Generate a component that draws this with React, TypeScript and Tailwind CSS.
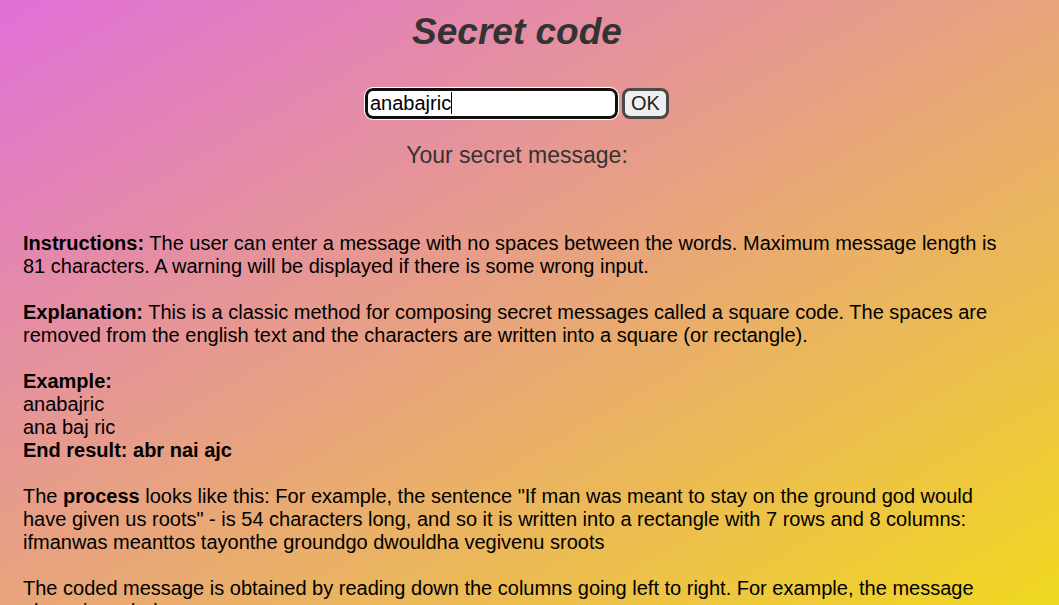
import { useState } from "react";

const SAMPLE = "anabajric";

function squareCode(text: string) {
  const cols = Math.ceil(Math.sqrt(text.length));
  return Array.from({ length: cols }, (_, c) =>
    text.split("").filter((_, i) => i % cols === c).join("")
  ).join(" ");
}

export default function App() {
  const [text, setText] = useState(SAMPLE);
  const [result, setResult] = useState("");
  const untouched = text === SAMPLE;
  return (
    <main className="h-screen overflow-y-auto bg-[linear-gradient(to_bottom_right,#e070d8,#f0d820)] py-[9px] pr-12 pl-[23px] font-['Liberation_Sans',Arial,sans-serif] text-black [scrollbar-width:none]">
      <header className="mb-[62px] text-center text-[#333]">
        <h1 className="mb-[33px] text-[37px] leading-[46px] font-bold italic">Secret code</h1>
        <form
          className="mb-[21px] flex items-center justify-center gap-1 text-[20px]"
          onSubmit={(e) => {
            e.preventDefault();
            setResult(squareCode(text));
          }}
        >
          <div className="relative flex">
            <input
              aria-label="Message"
              maxLength={81}
              autoFocus
              value={text}
              onChange={(e) => setText(e.target.value)}
              className={
                "h-[31px] w-[253px] rounded-[8px] border-3 border-[#101010] bg-white px-[2px] text-black outline outline-white " +
                (untouched ? "caret-transparent" : "caret-black")
              }
            />
            {untouched && (
              <span aria-hidden="true" className="pointer-events-none absolute top-1 left-[86px] h-[22px] w-px bg-black" />
            )}
          </div>
          <button
            type="submit"
            className="h-[31px] w-[47px] rounded-[8px] border-3 border-[#4a4a4a] bg-[#efefef] pb-[2px] leading-[22px] text-[#222]"
          >
            OK
          </button>
        </form>
        <p className="text-[23px] leading-[30px]">Your secret message: {result}</p>
      </header>
      <section className="flex flex-col gap-[23px] text-[20px] leading-[23px]">
        <p>
          <b>Instructions:</b> The user can enter a message with no spaces between the words. Maximum message length is 81 characters. A warning will be displayed if there is some wrong input.
        </p>
        <p>
          <b>Explanation:</b> This is a classic method for composing secret messages called a square code. The spaces are removed from the english text and the characters are written into a square (or rectangle).
        </p>
        <p>
          <b>Example:</b>
          <br />
          anabajric
          <br />
          ana baj ric
          <br />
          <b>End result: abr nai ajc</b>
        </p>
        <p>
          The <b>process</b> looks like this: For example, the sentence "If man was meant to stay on the ground god would have given us roots" - is 54 characters long, and so it is written into a rectangle with 7 rows and 8 columns: ifmanwas meanttos tayonthe groundgo dwouldha vegivenu sroots
        </p>
        <p>
          The coded message is obtained by reading down the columns going left to right. For example, the message above is coded as:
        </p>
      </section>
    </main>
  );
}
